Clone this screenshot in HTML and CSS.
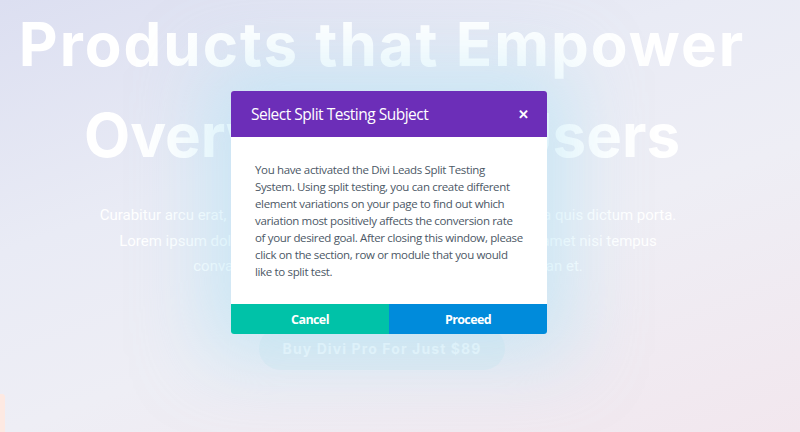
FILE: index.html
```html
<!DOCTYPE html>
<html lang="en">
<head>
  <meta charset="UTF-8" />
  <meta name="viewport" content="width=device-width, initial-scale=1.0"/>
  <title>Divi Leads — Split Testing</title>
  <link rel="stylesheet" href="styles.css">
</head>
<body>
  <section class="hero">
    <h1>Products that Empower<br><span class="tight">Overwhelmed Users</span></h1>
    <p class="lead">
      Curabitur arcu erat, accumsan id imperdiet et, porttitor at sem. Nulla quis dictum porta.<br>
      Lorem ipsum dolor sit amet, consectetur adipiscing elit. Sed sit amet nisi tempus<br>
      convallis quam, ultrices lacus. Nulla porttitor accumsan et.
    </p>
    <a class="cta" href="#">Buy Divi Pro For Just $89</a>
    <div class="peach"></div>
  </section>

  <div class="modal">
    <div class="modal-head">
      <h2>Select Split Testing Subject</h2>
      <button class="close">&#x2715;</button>
    </div>
    <div class="modal-body">
      <p>You have activated the Divi Leads Split Testing System. Using split testing, you can create different element variations on your page to find out which variation most positively affects the conversion rate of your desired goal. After closing this window, please click on the section, row or module that you would like to split test.</p>
    </div>
    <div class="modal-foot">
      <button class="btn cancel">Cancel</button>
      <button class="btn proceed">Proceed</button>
    </div>
  </div>
</body>
</html>
```

FILE: styles.css
```css
body {
  margin: 0;
  padding: 0;
  width: 800px;
  height: 432px;
  overflow: hidden;
  font-family: "Open Sans", Arial, sans-serif;
  background: linear-gradient(160deg, #dcdff1 0%, #e9ebf5 35%, #eeeef5 60%, #f2e7ee 100%);
}
.hero {
  height: 432px;
  text-align: center;
  padding-right: 36px;
}
.hero h1 {
  margin: -1px 0 0;
  font-family: Inter, "Open Sans", sans-serif;
  font-weight: 700;
  font-size: 60px;
  line-height: 91px;
  letter-spacing: 2px;
  color: #ffffff;
}
.hero h1 .tight {
  letter-spacing: 0;
}
.lead {
  margin: 22px 0 0 12px;
  font-family: Roboto, Arial, sans-serif;
  font-size: 15px;
  line-height: 25.5px;
  color: #ffffff;
}
.cta {
  display: inline-block;
  margin-top: 47px;
  padding: 13px 24px;
  border-radius: 24px;
  background: rgba(205, 228, 238, 0.35);
  color: #f6f9fc;
  font-family: Inter, sans-serif;
  font-weight: 700;
  font-size: 14px;
  letter-spacing: 1.1px;
  text-decoration: none;
}
.peach {
  position: absolute;
  left: 0;
  top: 394px;
  width: 5px;
  height: 40px;
  background: #fde9e2;
  border-radius: 0 3px 0 0;
}
.modal {
  position: absolute;
  left: 231px;
  top: 91px;
  width: 316px;
  border-radius: 3px;
  overflow: hidden;
  background: #ffffff;
  box-shadow: 0 0 70px 24px rgba(170, 225, 245, 0.5);
}
.modal-head {
  height: 46px;
  background: #6c2eb8;
  display: flex;
  align-items: center;
  justify-content: space-between;
  padding: 0 18px 0 20px;
}
.modal-head h2 {
  margin: 0;
  font-size: 15.5px;
  font-weight: 400;
  letter-spacing: -0.5px;
  color: #ffffff;
}
.close {
  background: none;
  border: none;
  padding: 0;
  color: #ffffff;
  font-size: 13px;
  font-weight: 700;
  cursor: pointer;
}
.modal-body {
  padding: 24px 24px 24px;
}
.modal-body p {
  margin: 0;
  font-size: 11.5px;
  letter-spacing: -0.35px;
  line-height: 17px;
  color: #4c5866;
}
.modal-foot {
  display: flex;
}
.btn {
  flex: 1;
  height: 30px;
  border: none;
  color: #ffffff;
  font-family: "Open Sans", sans-serif;
  font-weight: 700;
  font-size: 12.5px;
  letter-spacing: -0.6px;
  cursor: pointer;
}
.cancel { background: #00c2a8; }
.proceed { background: #008bdb; }
```
